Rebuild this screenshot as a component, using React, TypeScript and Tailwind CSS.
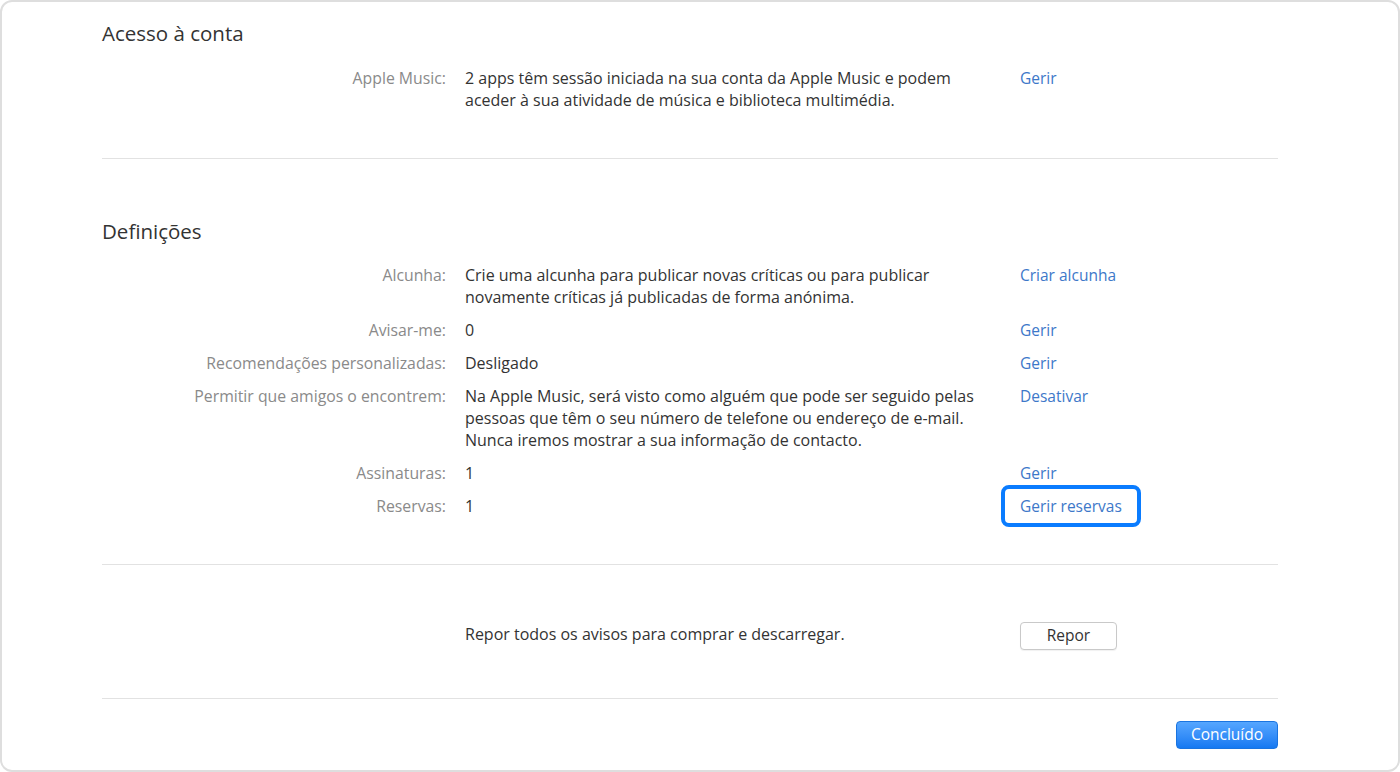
import React from "react";

const Row = ({
  label,
  children,
  action,
  highlight,
}: {
  label: string;
  children: React.ReactNode;
  action?: string;
  highlight?: boolean;
}) => (
  <div className="grid grid-cols-[344px_522px_1fr] gap-x-[20px] leading-[22px] text-[15.5px]">
    <div className="text-right text-[#8a8a8a] text-[15.8px]">{label}</div>
    <div className="text-[#333333] text-[16px] -ml-[1px]">{children}</div>
    <div className="pl-[12px]">
      {action &&
        (highlight ? (
          <span className="relative inline-block text-[#3d78c9]">
            {action}
            <span className="absolute -left-[19px] -right-[19px] -top-[10px] -bottom-[10px] border-[4px] border-[#0a7cff] rounded-[8px]" />
          </span>
        ) : (
          <span className="text-[#3d78c9]">{action}</span>
        ))}
    </div>
  </div>
);

export default function App() {
  return (
    <div className="w-[1400px] h-[772px] bg-white" style={{ fontFamily: '"Open Sans", "Noto Sans", sans-serif' }}>
      <div className="h-full border-2 border-[#dedede] rounded-[12px] pl-[100px] pr-[120px] pt-[17px]">
        {/* Acesso à conta */}
        <h2 className="text-[20.5px] leading-[28px] text-[#333333]">Acesso à conta</h2>
        <div className="mt-[20px] pb-[47px] border-b border-[#e2e2e2]">
          <Row label="Apple Music:" action="Gerir">
            2 apps têm sessão iniciada na sua conta da Apple Music e podem aceder à sua atividade de música e
            biblioteca multimédia.
          </Row>
        </div>

        {/* Definições */}
        <h2 className="mt-[58px] text-[20.5px] leading-[28px] text-[#333333]">Definições</h2>
        <div className="mt-[19px] pb-[47px] border-b border-[#e2e2e2] flex flex-col gap-y-[11px]">
          <Row label="Alcunha:" action="Criar alcunha">
            Crie uma alcunha para publicar novas críticas ou para publicar novamente críticas já publicadas de forma
            anónima.
          </Row>
          <Row label="Avisar-me:" action="Gerir">
            0
          </Row>
          <Row label="Recomendações personalizadas:" action="Gerir">
            Desligado
          </Row>
          <Row label="Permitir que amigos o encontrem:" action="Desativar">
            Na Apple Music, será visto como alguém que pode ser seguido pelas pessoas que têm o seu número de telefone
            ou endereço de e-mail. Nunca iremos mostrar a sua informação de contacto.
          </Row>
          <Row label="Assinaturas:" action="Gerir">
            1
          </Row>
          <Row label="Reservas:" action="Gerir reservas" highlight>
            1
          </Row>
        </div>

        {/* Repor */}
        <div className="pt-[57px] pb-[48px] border-b border-[#e2e2e2] grid grid-cols-[344px_522px_1fr] gap-x-[20px] items-center text-[15.5px]">
          <div />
          <div className="text-[#333333] text-[16px] -ml-[1px] -mt-[4px]">Repor todos os avisos para comprar e descarregar.</div>
          <div className="pl-[12px]">
            <button className="w-[97px] h-[28px] bg-white border border-[#c9c9c9] rounded-[4px] text-[#333333] text-[15.5px] shadow-[0_1px_1px_rgba(0,0,0,0.06)]">
              Repor
            </button>
          </div>
        </div>

        <div className="flex justify-end pt-[22px]">
          <button className="w-[102px] h-[28px] rounded-[4px] text-white text-[15.5px] bg-gradient-to-b from-[#55a6ff] to-[#1479f2] border border-[#1a74e0]">
            Concluído
          </button>
        </div>
      </div>
    </div>
  );
}
